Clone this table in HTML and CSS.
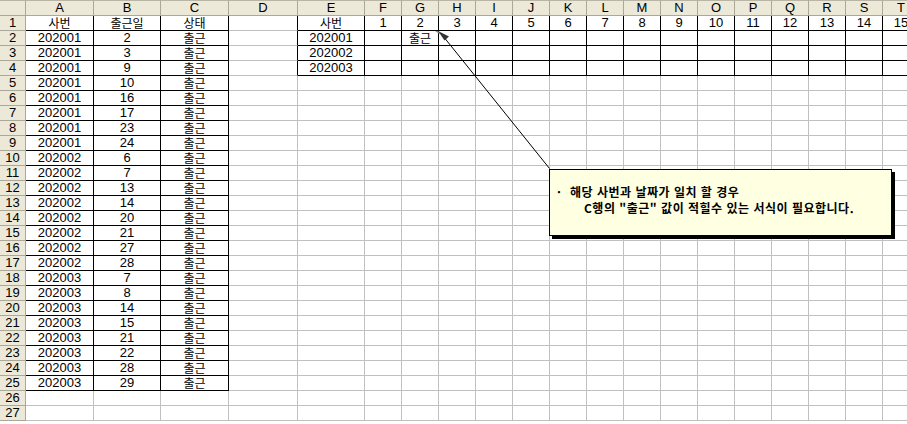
FILE: index.html
```html
<!DOCTYPE html>
<html lang="ko">
<head>
<meta charset="utf-8">
<title>Sheet</title>
<link rel="stylesheet" href="styles.css">
</head>
<body>
<div class="sheet">
<span class="hd corner"></span><span class="hd">A</span><span class="hd">B</span><span class="hd">C</span><span class="hd">D</span><span class="hd">E</span><span class="hd">F</span><span class="hd">G</span><span class="hd">H</span><span class="hd">I</span><span class="hd">J</span><span class="hd">K</span><span class="hd">L</span><span class="hd">M</span><span class="hd">N</span><span class="hd">O</span><span class="hd">P</span><span class="hd">Q</span><span class="hd">R</span><span class="hd">S</span><span class="hd">T</span>
<span class="rh">1</span><span class="k ko">사번</span><span class="k ko">출근일</span><span class="k ko">상태</span><span class="kr"></span><span class="k ko">사번</span><span class="k">1</span><span class="k">2</span><span class="k">3</span><span class="k">4</span><span class="k">5</span><span class="k">6</span><span class="k">7</span><span class="k">8</span><span class="k">9</span><span class="k">10</span><span class="k">11</span><span class="k">12</span><span class="k">13</span><span class="k">14</span><span class="k">15</span>
<span class="rh">2</span><span class="k">202001</span><span class="k">2</span><span class="k ko">출근</span><span class="kr"></span><span class="k">202001</span><span class="k"></span><span class="k ko">출근</span><span class="k"></span><span class="k"></span><span class="k"></span><span class="k"></span><span class="k"></span><span class="k"></span><span class="k"></span><span class="k"></span><span class="k"></span><span class="k"></span><span class="k"></span><span class="k"></span><span class="k"></span>
<span class="rh">3</span><span class="k">202001</span><span class="k">3</span><span class="k ko">출근</span><span class="kr"></span><span class="k">202002</span><span class="k"></span><span class="k"></span><span class="k"></span><span class="k"></span><span class="k"></span><span class="k"></span><span class="k"></span><span class="k"></span><span class="k"></span><span class="k"></span><span class="k"></span><span class="k"></span><span class="k"></span><span class="k"></span><span class="k"></span>
<span class="rh">4</span><span class="k">202001</span><span class="k">9</span><span class="k ko">출근</span><span class="kr"></span><span class="k">202003</span><span class="k"></span><span class="k"></span><span class="k"></span><span class="k"></span><span class="k"></span><span class="k"></span><span class="k"></span><span class="k"></span><span class="k"></span><span class="k"></span><span class="k"></span><span class="k"></span><span class="k"></span><span class="k"></span><span class="k"></span>
<span class="rh">5</span><span class="k">202001</span><span class="k">10</span><span class="k ko">출근</span><span></span><span></span><span></span><span></span><span></span><span></span><span></span><span></span><span></span><span></span><span></span><span></span><span></span><span></span><span></span><span></span><span></span>
<span class="rh">6</span><span class="k">202001</span><span class="k">16</span><span class="k ko">출근</span><span></span><span></span><span></span><span></span><span></span><span></span><span></span><span></span><span></span><span></span><span></span><span></span><span></span><span></span><span></span><span></span><span></span>
<span class="rh">7</span><span class="k">202001</span><span class="k">17</span><span class="k ko">출근</span><span></span><span></span><span></span><span></span><span></span><span></span><span></span><span></span><span></span><span></span><span></span><span></span><span></span><span></span><span></span><span></span><span></span>
<span class="rh">8</span><span class="k">202001</span><span class="k">23</span><span class="k ko">출근</span><span></span><span></span><span></span><span></span><span></span><span></span><span></span><span></span><span></span><span></span><span></span><span></span><span></span><span></span><span></span><span></span><span></span>
<span class="rh">9</span><span class="k">202001</span><span class="k">24</span><span class="k ko">출근</span><span></span><span></span><span></span><span></span><span></span><span></span><span></span><span></span><span></span><span></span><span></span><span></span><span></span><span></span><span></span><span></span><span></span>
<span class="rh">10</span><span class="k">202002</span><span class="k">6</span><span class="k ko">출근</span><span></span><span></span><span></span><span></span><span></span><span></span><span></span><span></span><span></span><span></span><span></span><span></span><span></span><span></span><span></span><span></span><span></span>
<span class="rh">11</span><span class="k">202002</span><span class="k">7</span><span class="k ko">출근</span><span></span><span></span><span></span><span></span><span></span><span></span><span></span><span></span><span></span><span></span><span></span><span></span><span></span><span></span><span></span><span></span><span></span>
<span class="rh">12</span><span class="k">202002</span><span class="k">13</span><span class="k ko">출근</span><span></span><span></span><span></span><span></span><span></span><span></span><span></span><span></span><span></span><span></span><span></span><span></span><span></span><span></span><span></span><span></span><span></span>
<span class="rh">13</span><span class="k">202002</span><span class="k">14</span><span class="k ko">출근</span><span></span><span></span><span></span><span></span><span></span><span></span><span></span><span></span><span></span><span></span><span></span><span></span><span></span><span></span><span></span><span></span><span></span>
<span class="rh">14</span><span class="k">202002</span><span class="k">20</span><span class="k ko">출근</span><span></span><span></span><span></span><span></span><span></span><span></span><span></span><span></span><span></span><span></span><span></span><span></span><span></span><span></span><span></span><span></span><span></span>
<span class="rh">15</span><span class="k">202002</span><span class="k">21</span><span class="k ko">출근</span><span></span><span></span><span></span><span></span><span></span><span></span><span></span><span></span><span></span><span></span><span></span><span></span><span></span><span></span><span></span><span></span><span></span>
<span class="rh">16</span><span class="k">202002</span><span class="k">27</span><span class="k ko">출근</span><span></span><span></span><span></span><span></span><span></span><span></span><span></span><span></span><span></span><span></span><span></span><span></span><span></span><span></span><span></span><span></span><span></span>
<span class="rh">17</span><span class="k">202002</span><span class="k">28</span><span class="k ko">출근</span><span></span><span></span><span></span><span></span><span></span><span></span><span></span><span></span><span></span><span></span><span></span><span></span><span></span><span></span><span></span><span></span><span></span>
<span class="rh">18</span><span class="k">202003</span><span class="k">7</span><span class="k ko">출근</span><span></span><span></span><span></span><span></span><span></span><span></span><span></span><span></span><span></span><span></span><span></span><span></span><span></span><span></span><span></span><span></span><span></span>
<span class="rh">19</span><span class="k">202003</span><span class="k">8</span><span class="k ko">출근</span><span></span><span></span><span></span><span></span><span></span><span></span><span></span><span></span><span></span><span></span><span></span><span></span><span></span><span></span><span></span><span></span><span></span>
<span class="rh">20</span><span class="k">202003</span><span class="k">14</span><span class="k ko">출근</span><span></span><span></span><span></span><span></span><span></span><span></span><span></span><span></span><span></span><span></span><span></span><span></span><span></span><span></span><span></span><span></span><span></span>
<span class="rh">21</span><span class="k">202003</span><span class="k">15</span><span class="k ko">출근</span><span></span><span></span><span></span><span></span><span></span><span></span><span></span><span></span><span></span><span></span><span></span><span></span><span></span><span></span><span></span><span></span><span></span>
<span class="rh">22</span><span class="k">202003</span><span class="k">21</span><span class="k ko">출근</span><span></span><span></span><span></span><span></span><span></span><span></span><span></span><span></span><span></span><span></span><span></span><span></span><span></span><span></span><span></span><span></span><span></span>
<span class="rh">23</span><span class="k">202003</span><span class="k">22</span><span class="k ko">출근</span><span></span><span></span><span></span><span></span><span></span><span></span><span></span><span></span><span></span><span></span><span></span><span></span><span></span><span></span><span></span><span></span><span></span>
<span class="rh">24</span><span class="k">202003</span><span class="k">28</span><span class="k ko">출근</span><span></span><span></span><span></span><span></span><span></span><span></span><span></span><span></span><span></span><span></span><span></span><span></span><span></span><span></span><span></span><span></span><span></span>
<span class="rh">25</span><span class="k">202003</span><span class="k">29</span><span class="k ko">출근</span><span></span><span></span><span></span><span></span><span></span><span></span><span></span><span></span><span></span><span></span><span></span><span></span><span></span><span></span><span></span><span></span><span></span>
<span class="rh">26</span><span></span><span></span><span></span><span></span><span></span><span></span><span></span><span></span><span></span><span></span><span></span><span></span><span></span><span></span><span></span><span></span><span></span><span></span><span></span><span></span>
<span class="rh">27</span><span></span><span></span><span></span><span></span><span></span><span></span><span></span><span></span><span></span><span></span><span></span><span></span><span></span><span></span><span></span><span></span><span></span><span></span><span></span><span></span>
</div>
<svg class="arrow" width="907" height="424" viewBox="0 0 907 424">
<line x1="549.5" y1="168.5" x2="443" y2="36" stroke="#000" stroke-width="1"/>
<polygon points="438,31 444.5,40.5 449,36.5" fill="#333"/>
<polygon points="435,31 438,31 441,35" fill="#8a8a80"/>
</svg>
<div class="note">
<p class="l1"><span class="dot">·</span>해당 사번과 날짜가 일치 할 경우</p>
<p class="l2">C행의 "출근" 값이 적힐수 있는 서식이 필요합니다.</p>
</div>
</body>
</html>
```
FILE: styles.css
```css
html, body {
  margin: 0;
  padding: 0;
  background: #fff;
  overflow: hidden;
}
body {
  position: relative;
  width: 907px;
  height: 424px;
  font-family: "Liberation Sans Narrow", "Liberation Sans", "Noto Sans CJK KR", sans-serif;
  font-size: 13px;
  color: #000;
}
.sheet {
  display: grid;
  grid-template-columns: 26px 68px 67px 68px 69px 67px repeat(15, 37px);
  grid-template-rows: 16px repeat(27, 15px);
  width: 920px;
}
.sheet > span {
  box-sizing: border-box;
  border-right: 1px solid #c0c0c0;
  border-bottom: 1px solid #c0c0c0;
  text-align: center;
  line-height: 14px;
  white-space: nowrap;
}
.sheet > .ko {
  font-family: "Noto Sans CJK KR", sans-serif;
  font-size: 12px;
  line-height: 14px;
}
.sheet > .hd {
  background: #ece9d8;
  border-top: 1px solid #b8b5a6;
  border-right: 1px solid #aca899;
  border-bottom: 1px solid #aca899;
  line-height: 14px;
}
.sheet > .rh {
  background: #ece9d8;
  border-right: 1px solid #aca899;
  border-bottom: 1px solid #aca899;
}
.sheet > .k {
  border-right-color: #000;
  border-bottom-color: #000;
}
.sheet > .kr {
  border-right-color: #000;
}
.arrow {
  position: absolute;
  left: 0;
  top: 0;
  pointer-events: none;
}
.note {
  position: absolute;
  left: 549px;
  top: 169px;
  width: 343px;
  height: 67px;
  box-sizing: border-box;
  border: 1px solid #000;
  background: #ffffe1;
  box-shadow: 3px 3px 0 #000;
  padding: 14px 0 0 7px;
  font-family: "Noto Sans CJK KR", "Liberation Sans", sans-serif;
  font-weight: bold;
  font-size: 12px;
  letter-spacing: 0.5px;
}
.note p {
  margin: 0;
  line-height: 16px;
}
.note .dot {
  display: inline-block;
  width: 13px;
}
.note .l2 {
  padding-left: 27px;
}
```
